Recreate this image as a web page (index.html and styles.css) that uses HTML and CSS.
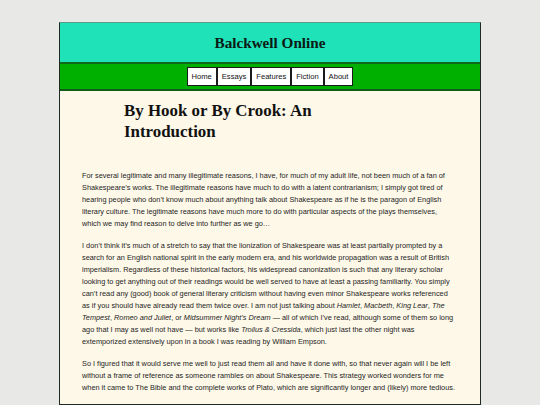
FILE: index.html
```html
<!DOCTYPE html>
<html>
<head>
<meta charset="utf-8">
<link rel="stylesheet" href="styles.css">
</head>
<body>
<div class="page">
  <header class="masthead">
    <h1 class="site-title">Balckwell Online</h1>
  </header>
  <nav class="nav">
    <a class="nav-item" href="#">Home</a><a class="nav-item" href="#">Essays</a><a class="nav-item" href="#">Features</a><a class="nav-item" href="#">Fiction</a><a class="nav-item" href="#">About</a>
  </nav>
  <main class="content">
    <h2 class="article-title">By Hook or By Crook: An Introduction</h2>
    <p>For several legitimate and many illegitimate reasons, I have, for much of my adult life, not been much of a fan of Shakespeare’s works. The illegitimate reasons have much to do with a latent contrarianism; I simply got tired of hearing people who don’t know much about anything talk about Shakespeare as if he is the paragon of English literary culture. The legitimate reasons have much more to do with particular aspects of the plays themselves, which we may find reason to delve into further as we go…</p>
    <p>I don’t think it’s much of a stretch to say that the lionization of Shakespeare was at least partially prompted by a search for an English national spirit in the early modern era, and his worldwide propagation was a result of British imperialism. Regardless of these historical factors, his widespread canonization is such that any literary scholar looking to get anything out of their readings would be well served to have at least a passing familiarity. You simply can’t read any (good) book of general literary criticism without having even minor Shakespeare works referenced as if you should have already read them twice over. I am not just talking about <em>Hamlet</em>, <em>Macbeth</em>, <em>King Lear</em>, <em>The Tempest</em>, <em>Romeo and Juliet</em>, or <em>Midsummer Night’s Dream</em> — all of which I’ve read, although some of them so long ago that I may as well not have — but works like <em>Troilus &amp; Cressida</em>, which just last the other night was extemporized extensively upon in a book I was reading by William Empson.</p>
    <p>So I figured that it would serve me well to just read them all and have it done with, so that never again will I be left without a frame of reference as someone rambles on about Shakespeare. This strategy worked wonders for me when it came to The Bible and the complete works of Plato, which are significantly longer and (likely) more tedious.</p>
  </main>
</div>
</body>
</html>
```

FILE: styles.css
```css
html, body {
  margin: 0;
  padding: 0;
  background: #e8e8e6;
}

.page {
  width: 420px;
  margin: 22px auto 0;
  border: 1px solid #1e2a22;
  border-top-color: #5f9c86;
  background: #fdf8e8;
}

.masthead {
  background: #20e2b9;
  height: 39px;
  display: flex;
  align-items: center;
  justify-content: center;
  border-bottom: 2px solid #0d6a1a;
}

.site-title {
  margin: 0;
  font-family: "Liberation Serif", "Times New Roman", serif;
  font-weight: bold;
  font-size: 15.2px;
  color: #0b1a14;
}

.nav {
  background: #00b000;
  height: 25px;
  display: flex;
  align-items: center;
  justify-content: center;
  border-bottom: 2px solid #0d5e14;
}

.nav-item {
  display: block;
  background: #ffffff;
  border: 1px solid #1b1b1b;
  height: 17px;
  line-height: 17px;
  padding: 0 4px;
  font-family: "Liberation Sans", Arial, sans-serif;
  font-size: 7.6px;
  color: #111;
  text-decoration: none;
}

.content {
  padding: 10px 23px 0 22px;
  font-family: "Liberation Sans", Arial, sans-serif;
  font-size: 7.35px;
  line-height: 12px;
  color: #1e1e1e;
}

.article-title {
  margin: 0 0 28px 42px;
  width: 200px;
  font-family: "Liberation Serif", "Times New Roman", serif;
  font-weight: bold;
  font-size: 16.9px;
  line-height: 20.5px;
  color: #111;
}

.content p {
  margin: 0 0 10px;
}
```
